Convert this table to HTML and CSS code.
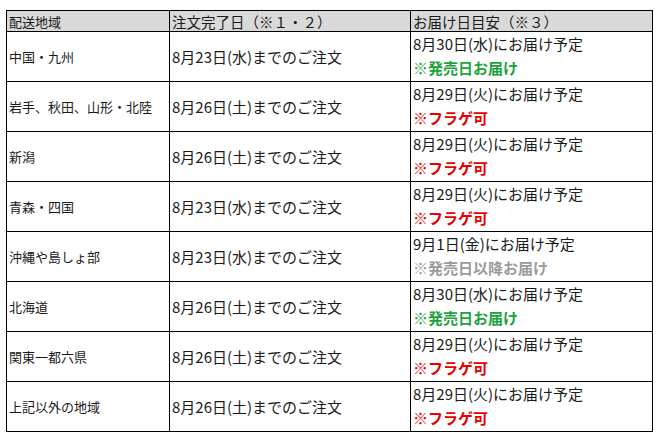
FILE: index.html
```html
<!DOCTYPE html>
<html lang="ja">
<head>
<meta charset="utf-8">
<link rel="stylesheet" href="styles.css">
</head>
<body>
<table class="ship">
  <colgroup><col class="c1"><col class="c2"><col class="c3"></colgroup>
  <thead>
    <tr><th class="area">配送地域</th><th>注文完了日（※１・２）</th><th>お届け日目安（※３）</th></tr>
  </thead>
  <tbody>
    <tr><td class="area">中国・九州</td><td class="order">8月23日(水)までのご注文</td><td class="deliv"><div>8月30日(水)にお届け予定</div><div class="note green">※発売日お届け</div></td></tr>
    <tr><td class="area">岩手、秋田、山形・北陸</td><td class="order">8月26日(土)までのご注文</td><td class="deliv"><div>8月29日(火)にお届け予定</div><div class="note red">※フラゲ可</div></td></tr>
    <tr><td class="area">新潟</td><td class="order">8月26日(土)までのご注文</td><td class="deliv"><div>8月29日(火)にお届け予定</div><div class="note red">※フラゲ可</div></td></tr>
    <tr><td class="area">青森・四国</td><td class="order">8月23日(水)までのご注文</td><td class="deliv"><div>8月29日(火)にお届け予定</div><div class="note red">※フラゲ可</div></td></tr>
    <tr><td class="area">沖縄や島しょ部</td><td class="order">8月23日(水)までのご注文</td><td class="deliv"><div>9月1日(金)にお届け予定</div><div class="note gray">※発売日以降お届け</div></td></tr>
    <tr><td class="area">北海道</td><td class="order">8月26日(土)までのご注文</td><td class="deliv"><div>8月30日(水)にお届け予定</div><div class="note green">※発売日お届け</div></td></tr>
    <tr><td class="area">関東一都六県</td><td class="order">8月26日(土)までのご注文</td><td class="deliv"><div>8月29日(火)にお届け予定</div><div class="note red">※フラゲ可</div></td></tr>
    <tr><td class="area">上記以外の地域</td><td class="order">8月26日(土)までのご注文</td><td class="deliv"><div>8月29日(火)にお届け予定</div><div class="note red">※フラゲ可</div></td></tr>
  </tbody>
</table>
</body>
</html>
```

FILE: styles.css
```css
html, body {
  margin: 0;
  padding: 0;
  background: #fff;
}
body {
  padding: 10px 0 0 6px;
  font-family: "Noto Sans CJK JP", "Noto Sans", sans-serif;
  color: #1a1a1a;
}
.ship {
  border-collapse: collapse;
  table-layout: fixed;
  width: 646px;
}
.c1 { width: 163px; }
.c2 { width: 241px; }
.c3 { width: 242px; }
.ship th, .ship td {
  border: 1px solid #000;
  padding: 0 0 0 2px;
  text-align: left;
  vertical-align: middle;
  white-space: nowrap;
}
.ship th {
  background: #d9d9d9;
  font-weight: normal;
  font-size: 14.5px;
  height: 20px;
  line-height: 19px;
}
.ship th.area {
  font-size: 13px;
}
.ship td {
  height: 49px;
  font-size: 15px;
}
.ship td.area {
  font-size: 13px;
}
.ship td.deliv {
  vertical-align: top;
  font-size: 15px;
}
.deliv div {
  line-height: 23px;
}
.note {
  font-weight: bold;
  font-size: 15px;
  margin-top: 1px;
}
.green { color: #1ba33c; }
.red { color: #e60000; }
.gray { color: #9a9a9a; }
```
